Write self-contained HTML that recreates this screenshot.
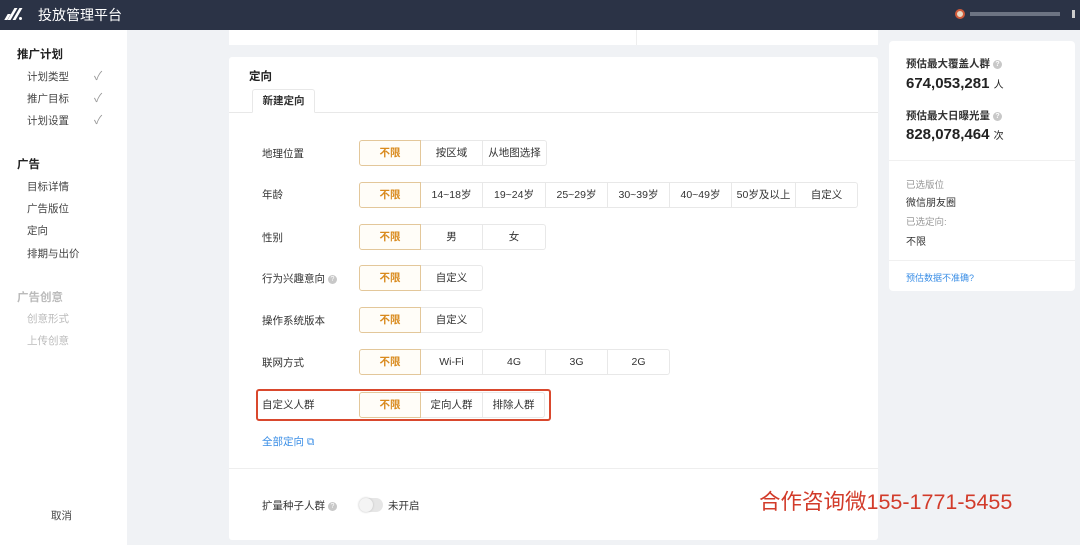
<!DOCTYPE html>
<html><head><meta charset="utf-8"><style>
*{margin:0;padding:0;box-sizing:border-box}
body{width:1080px;height:545px;overflow:hidden;background:#f0f2f5;font-family:"Liberation Sans","Noto Sans CJK SC",sans-serif;font-size:11px;color:#333;position:relative}
.a{position:absolute}
.hdr{left:0;top:0;width:1080px;height:30px;background:#2b3346}
.side{left:0;top:30px;width:127px;height:515px;background:#fff}
.card{background:#fff}
.g{position:absolute;display:flex;height:26px}
.g span{display:block;height:26px;line-height:24px;text-align:center;border:1px solid #e8e8e8;border-left:none;color:#333;font-size:10.5px}
.g span:first-child{border:1px solid #e3c79a;color:#d98a1d;font-weight:bold;background:#fffdf8;border-radius:3px 0 0 3px}
.g span:last-child{border-radius:0 3px 3px 0}
.lbl{position:absolute;left:262px;font-size:10.5px;color:#333}
.q{display:inline-block;width:9px;height:9px;border-radius:50%;background:#c8c8c8;color:#fff;font-size:7px;line-height:9px;text-align:center;vertical-align:1px;margin-left:3px}
.si{position:absolute;left:27px;font-size:10.5px;color:#444}
.ck{position:absolute;left:94px;color:#999;font-size:12px}
.bar{position:absolute;top:8px;width:3px;height:12px;background:#fff;transform:skewX(-30deg)}
</style></head><body>
<div class="a hdr"></div>
<div class="bar" style="left:6px;height:6px;top:14px"></div>
<div class="bar" style="left:11px"></div>
<div class="bar" style="left:16px"></div>
<div class="a" style="left:19px;top:17px;width:3px;height:3px;border-radius:50%;background:#fff"></div>
<div class="a" style="left:38px;top:5px;color:#fff;font-size:14px">投放管理平台</div>
<div class="a" style="left:955px;top:9px;width:10px;height:10px;border-radius:50%;background:#e9d9c4;border:2px solid #d05a3a"></div>
<div class="a" style="left:970px;top:12px;width:90px;height:4px;background:#8a909c;opacity:.7"></div>
<div class="a" style="left:1072px;top:10px;width:3px;height:8px;background:#ccc"></div>

<div class="a side"></div>
<div class="a" style="left:17px;top:46px;font-size:11.5px;font-weight:bold;color:#222">推广计划</div>
<div class="si" style="top:69px">计划类型</div><div class="ck" style="top:67px">✓</div>
<div class="si" style="top:91px">推广目标</div><div class="ck" style="top:89px">✓</div>
<div class="si" style="top:113px">计划设置</div><div class="ck" style="top:111px">✓</div>
<div class="a" style="left:17px;top:156px;font-size:11.5px;font-weight:bold;color:#222">广告</div>
<div class="si" style="top:179px">目标详情</div>
<div class="si" style="top:201px">广告版位</div>
<div class="si" style="top:223px">定向</div>
<div class="si" style="top:246px">排期与出价</div>
<div class="a" style="left:17px;top:289px;font-size:11.5px;font-weight:bold;color:#bbb">广告创意</div>
<div class="si" style="top:311px;color:#bbb">创意形式</div>
<div class="si" style="top:333px;color:#bbb">上传创意</div>
<div class="a" style="left:51px;top:508px;font-size:10.5px;color:#444">取消</div>

<div class="a card" style="left:229px;top:30px;width:649px;height:15px"></div>
<div class="a" style="left:636px;top:30px;width:1px;height:15px;background:#eee"></div>

<div class="a card" style="left:229px;top:57px;width:649px;height:483px;border-radius:3px"></div>
<div class="a" style="left:249px;top:68px;font-size:11.5px;font-weight:bold;color:#222">定向</div>
<div class="a" style="left:229px;top:112px;width:649px;height:1px;background:#e8e8e8"></div>
<div class="a" style="left:252px;top:89px;width:63px;height:24px;border:1px solid #e8e8e8;border-bottom:1px solid #fff;border-radius:3px 3px 0 0;background:#fff;text-align:center;line-height:22px;font-size:10.5px;font-weight:bold;color:#333">新建定向</div>

<div class="lbl" style="top:146px">地理位置</div>
<div class="g" style="left:359px;top:140px"><span style="width:62px">不限</span><span style="width:62px">按区域</span><span style="width:64px">从地图选择</span></div>
<div class="lbl" style="top:187px">年龄</div>
<div class="g" style="left:359px;top:182px"><span style="width:62px">不限</span><span style="width:62px">14~18岁</span><span style="width:63px">19~24岁</span><span style="width:62px">25~29岁</span><span style="width:62px">30~39岁</span><span style="width:62px">40~49岁</span><span style="width:64px">50岁及以上</span><span style="width:62px">自定义</span></div>
<div class="lbl" style="top:230px">性别</div>
<div class="g" style="left:359px;top:224px"><span style="width:62px">不限</span><span style="width:62px">男</span><span style="width:63px">女</span></div>
<div class="lbl" style="top:271px">行为兴趣意向<span class="q">?</span></div>
<div class="g" style="left:359px;top:265px"><span style="width:62px">不限</span><span style="width:62px">自定义</span></div>
<div class="lbl" style="top:313px">操作系统版本</div>
<div class="g" style="left:359px;top:307px"><span style="width:62px">不限</span><span style="width:62px">自定义</span></div>
<div class="lbl" style="top:355px">联网方式</div>
<div class="g" style="left:359px;top:349px"><span style="width:62px">不限</span><span style="width:62px">Wi-Fi</span><span style="width:63px">4G</span><span style="width:62px">3G</span><span style="width:62px">2G</span></div>
<div class="a" style="left:256px;top:389px;width:295px;height:32px;border:2px solid #d9482d;border-radius:3px"></div>
<div class="lbl" style="top:397px">自定义人群</div>
<div class="g" style="left:359px;top:392px"><span style="width:62px">不限</span><span style="width:62px">定向人群</span><span style="width:62px">排除人群</span></div>
<div class="a" style="left:262px;top:434px;font-size:10.5px;color:#3a8ee6">全部定向 ⧉</div>
<div class="a" style="left:229px;top:468px;width:649px;height:1px;background:#eee"></div>
<div class="lbl" style="top:498px">扩量种子人群<span class="q">?</span></div>
<div class="a" style="left:359px;top:498px;width:24px;height:14px;border-radius:7px;background:#e6e6e6"></div>
<div class="a" style="left:359px;top:498px;width:14px;height:14px;border-radius:50%;background:#f4f4f4;box-shadow:0 0 2px #bbb"></div>
<div class="a" style="left:388px;top:498px;font-size:10.5px;color:#333">未开启</div>
<div class="a" style="left:759px;top:485px;font-size:21.5px;color:#d23b2a">合作咨询微155-1771-5455</div>

<div class="a card" style="left:889px;top:41px;width:186px;height:250px;border-radius:4px"></div>
<div class="a" style="left:906px;top:56px;font-size:10.5px;font-weight:bold;color:#333">预估最大覆盖人群<span class="q">?</span></div>
<div class="a" style="left:906px;top:75px;font-size:15px;font-weight:bold;color:#222">674,053,281 <span style="font-size:10px;font-weight:normal">人</span></div>
<div class="a" style="left:906px;top:108px;font-size:10.5px;font-weight:bold;color:#333">预估最大日曝光量<span class="q">?</span></div>
<div class="a" style="left:906px;top:126px;font-size:15px;font-weight:bold;color:#222">828,078,464 <span style="font-size:10px;font-weight:normal">次</span></div>
<div class="a" style="left:889px;top:160px;width:186px;height:1px;background:#f0f0f0"></div>
<div class="a" style="left:906px;top:177px;font-size:9.5px;color:#999">已选版位</div>
<div class="a" style="left:906px;top:194px;font-size:10px;color:#333">微信朋友圈</div>
<div class="a" style="left:906px;top:214px;font-size:9.5px;color:#999">已选定向:</div>
<div class="a" style="left:906px;top:233px;font-size:10px;color:#333">不限</div>
<div class="a" style="left:889px;top:260px;width:186px;height:1px;background:#f0f0f0"></div>
<div class="a" style="left:906px;top:271px;font-size:9px;color:#3a8ee6">预估数据不准确?</div>
</body></html>
